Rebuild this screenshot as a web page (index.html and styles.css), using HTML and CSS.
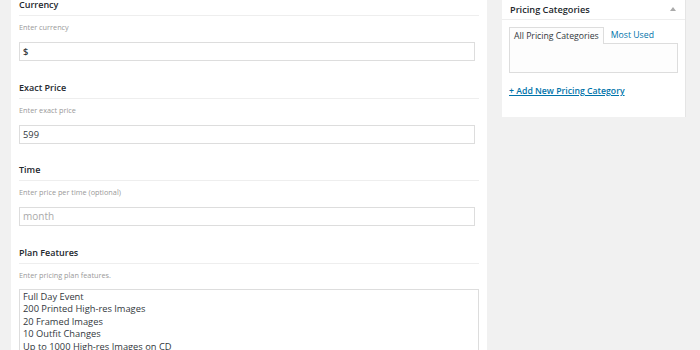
FILE: index.html
```html
<!DOCTYPE html>
<html lang="en">
<head>
    <meta charset="UTF-8">
    <meta name="viewport" content="width=device-width, initial-scale=1.0">
    <title>Pricing plan</title>
    <link rel="stylesheet" href="styles.css">
</head>
<body>
    <div class="wrap">
        <div class="main">
            <div class="field">
                <h4>Currency</h4>
                <p class="desc">Enter currency</p>
                <div class="input strong">$</div>
            </div>
            <div class="field">
                <h4>Exact Price</h4>
                <p class="desc">Enter exact price</p>
                <div class="input">599</div>
            </div>
            <div class="field">
                <h4>Time</h4>
                <p class="desc">Enter price per time (optional)</p>
                <div class="input placeholder">month</div>
            </div>
            <div class="field">
                <h4>Plan Features</h4>
                <p class="desc">Enter pricing plan features.</p>
                <div class="textarea">
                    <div>Full Day Event</div>
                    <div>200 Printed High-res Images</div>
                    <div>20 Framed Images</div>
                    <div>10 Outfit Changes</div>
                    <div>Up to 1000 High-res Images on CD</div>
                </div>
            </div>
        </div>

        <div class="sidebar">
            <div class="box">
                <div class="box-head">
                    <span>Pricing Categories</span>
                    <span class="toggle"></span>
                </div>
                <div class="box-body">
                    <div class="tabs">
                        <span class="tab active">All Pricing Categories</span>
                        <span class="tab">Most Used</span>
                    </div>
                    <div class="tab-panel"></div>
                    <a class="add-link" href="#">+ Add New Pricing Category</a>
                </div>
            </div>
        </div>
    </div>
</body>
</html>
```

FILE: styles.css
```css
body {
    margin: 0;
    background: #f1f1f1;
    font-family: "Open Sans", "Noto Sans", sans-serif;
    color: #23282d;
    overflow: hidden;
}
.wrap {
    display: flex;
    align-items: flex-start;
    padding-left: 11px;
}
.main {
    width: 460px;
    margin-top: -2px;
    padding: 0 8px 40px 8px;
    background: white;
}
.field {
    margin-bottom: 19.6px;
}
.field h4 {
    margin: 0;
    font-size: 9px;
    font-weight: 600;
    line-height: 14px;
    padding-bottom: 3px;
    border-bottom: 1px solid #eee;
}
.desc {
    margin: 5px 0 9px 0;
    font-size: 7.3px;
    line-height: 12px;
    color: #999;
}
.input {
    width: 449px;
    height: 17px;
    padding: 0 2px 0 3px;
    border: 1px solid #ddd;
    font-size: 9.3px;
    line-height: 17px;
    color: #32373c;
}
.input.strong {
    font-weight: 600;
}
.input.placeholder {
    color: #aaa;
    font-size: 10px;
}
.textarea {
    height: 80px;
    margin-top: -1px;
    padding: 1px 3px 2px 3px;
    border: 1px solid #ddd;
    font-size: 9.3px;
    line-height: 12.5px;
    color: #32373c;
}
.sidebar {
    margin-left: 15px;
}
.box {
    width: 184px;
    height: 117px;
    background: white;
    border-right: 1px solid #e5e5e5;
    box-sizing: border-box;
}
.box-head {
    display: flex;
    justify-content: space-between;
    align-items: center;
    height: 20px;
    padding: 0 9px 1px 8px;
    box-sizing: border-box;
    border-bottom: 1px solid #eee;
    font-size: 9.2px;
    font-weight: 600;
}
.toggle {
    width: 0;
    height: 0;
    border-left: 3px solid transparent;
    border-right: 3px solid transparent;
    border-bottom: 4px solid #aaa;
}
.box-body {
    padding: 6px 7px 0 7px;
}
.tabs {
    display: flex;
    font-size: 8.7px;
    line-height: 16px;
}
.tab {
    padding: 0 4px 0 6px;
    border: 1px solid transparent;
    border-bottom: none;
    color: #0073aa;
}
.tab.active {
    padding: 0 4px;
    color: #32373c;
    background: #fdfdfd;
    border-color: #ddd;
    position: relative;
    top: 1px;
    z-index: 1;
}
.tab-panel {
    height: 28px;
    border: 1px solid #ddd;
    background: #fdfdfd;
}
.add-link {
    display: block;
    margin-top: 12px;
    font-size: 8.7px;
    font-weight: 600;
    color: #0073aa;
}
```
